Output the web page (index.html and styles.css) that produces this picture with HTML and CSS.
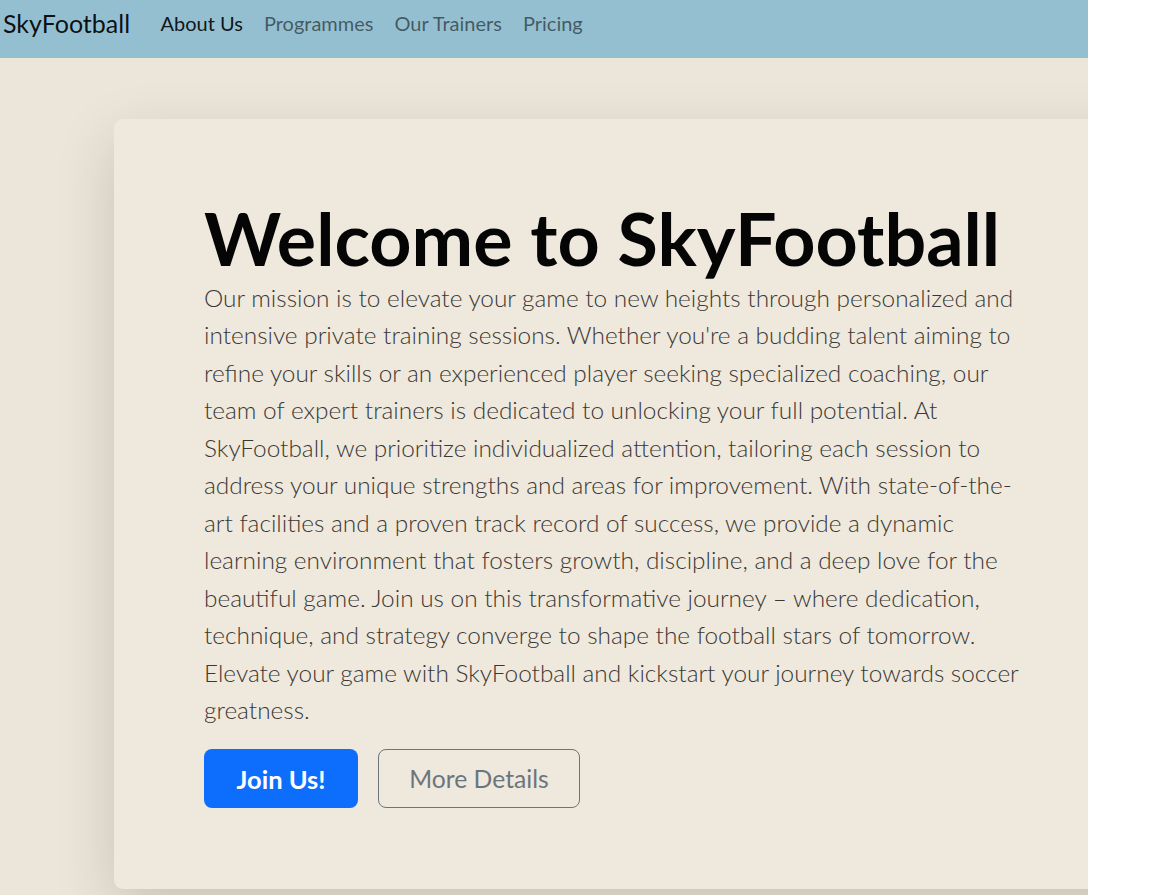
FILE: index.html
```html
<!DOCTYPE html>
<html lang="en">
<head>
<meta charset="utf-8">
<title>SkyFootball</title>
<link rel="stylesheet" href="styles.css">
</head>
<body>
<nav class="navbar">
  <a class="brand" href="#">SkyFootball</a>
  <ul class="nav-links">
    <li><a class="nav-link active" href="#">About Us</a></li>
    <li><a class="nav-link" href="#">Programmes</a></li>
    <li><a class="nav-link" href="#">Our Trainers</a></li>
    <li><a class="nav-link" href="#">Pricing</a></li>
  </ul>
</nav>
<main class="hero-wrap">
  <section class="hero-card">
    <h1 class="hero-title">Welcome to SkyFootball</h1>
    <p class="hero-text">Our mission is to elevate your game to new heights through personalized and intensive private training sessions. Whether you're a budding talent aiming to refine your skills or an experienced player seeking specialized coaching, our team of expert trainers is dedicated to unlocking your full potential. At SkyFootball, we prioritize individualized attention, tailoring each session to address your unique strengths and areas for improvement. With state-of-the-art facilities and a proven track record of success, we provide a dynamic learning environment that fosters growth, discipline, and a deep love for the beautiful game. Join us on this transformative journey – where dedication, technique, and strategy converge to shape the football stars of tomorrow. Elevate your game with SkyFootball and kickstart your journey towards soccer greatness.</p>
    <div class="hero-actions">
      <a class="btn btn-primary" href="#">Join Us!</a>
      <a class="btn btn-outline" href="#">More Details</a>
    </div>
  </section>
</main>
</body>
</html>
```
FILE: styles.css
```css
html {
  background: #ffffff;
}
body {
  margin: 0;
  width: 1088px;
  min-height: 895px;
  background: #ece6da;
  font-family: "Lato", "Noto Sans", sans-serif;
  color: #212529;
  overflow: hidden;
}
a {
  text-decoration: none;
}
.navbar {
  height: 58px;
  box-sizing: border-box;
  background: #93bfd0;
  display: flex;
  align-items: flex-start;
  padding: 8px 0 0 3px;
}
.brand {
  font-size: 25px;
  line-height: 30px;
  color: rgba(0, 0, 0, 0.92);
  margin-right: 20px;
}
.nav-links {
  list-style: none;
  margin: 0;
  padding: 3px 0 0;
  display: flex;
}
.nav-link {
  display: block;
  font-size: 20px;
  line-height: 24px;
  padding: 0 10.5px;
  color: rgba(0, 0, 0, 0.55);
}
.nav-link.active {
  color: rgba(0, 0, 0, 0.9);
}
.hero-wrap {
  padding: 61px 0 0 114px;
}
.hero-card {
  width: 1040px;
  box-sizing: border-box;
  background: #efe8dc;
  border-radius: 9px;
  box-shadow: 0 20px 60px rgba(0, 0, 0, 0.16);
  padding: 79px 0 81px 90px;
}
.hero-title {
  margin: 0;
  font-size: 73.6px;
  line-height: 1.1;
  font-weight: 700;
  color: #050505;
}
.hero-text {
  margin: 0;
  width: 826px;
  font-size: 24.4px;
  line-height: 37.5px;
  font-weight: 300;
  color: #3a3835;
}
.hero-actions {
  margin-top: 20.5px;
  display: flex;
  gap: 20px;
}
.btn {
  display: flex;
  align-items: center;
  justify-content: center;
  height: 59px;
  box-sizing: border-box;
  border-radius: 8px;
}
.btn-primary {
  width: 154px;
  background: #0d6efd;
  color: #ffffff;
  font-weight: 700;
  font-size: 25.5px;
}
.btn-outline {
  width: 202px;
  border: 1px solid #6c757d;
  color: #6c757d;
  font-size: 24.7px;
}
```
